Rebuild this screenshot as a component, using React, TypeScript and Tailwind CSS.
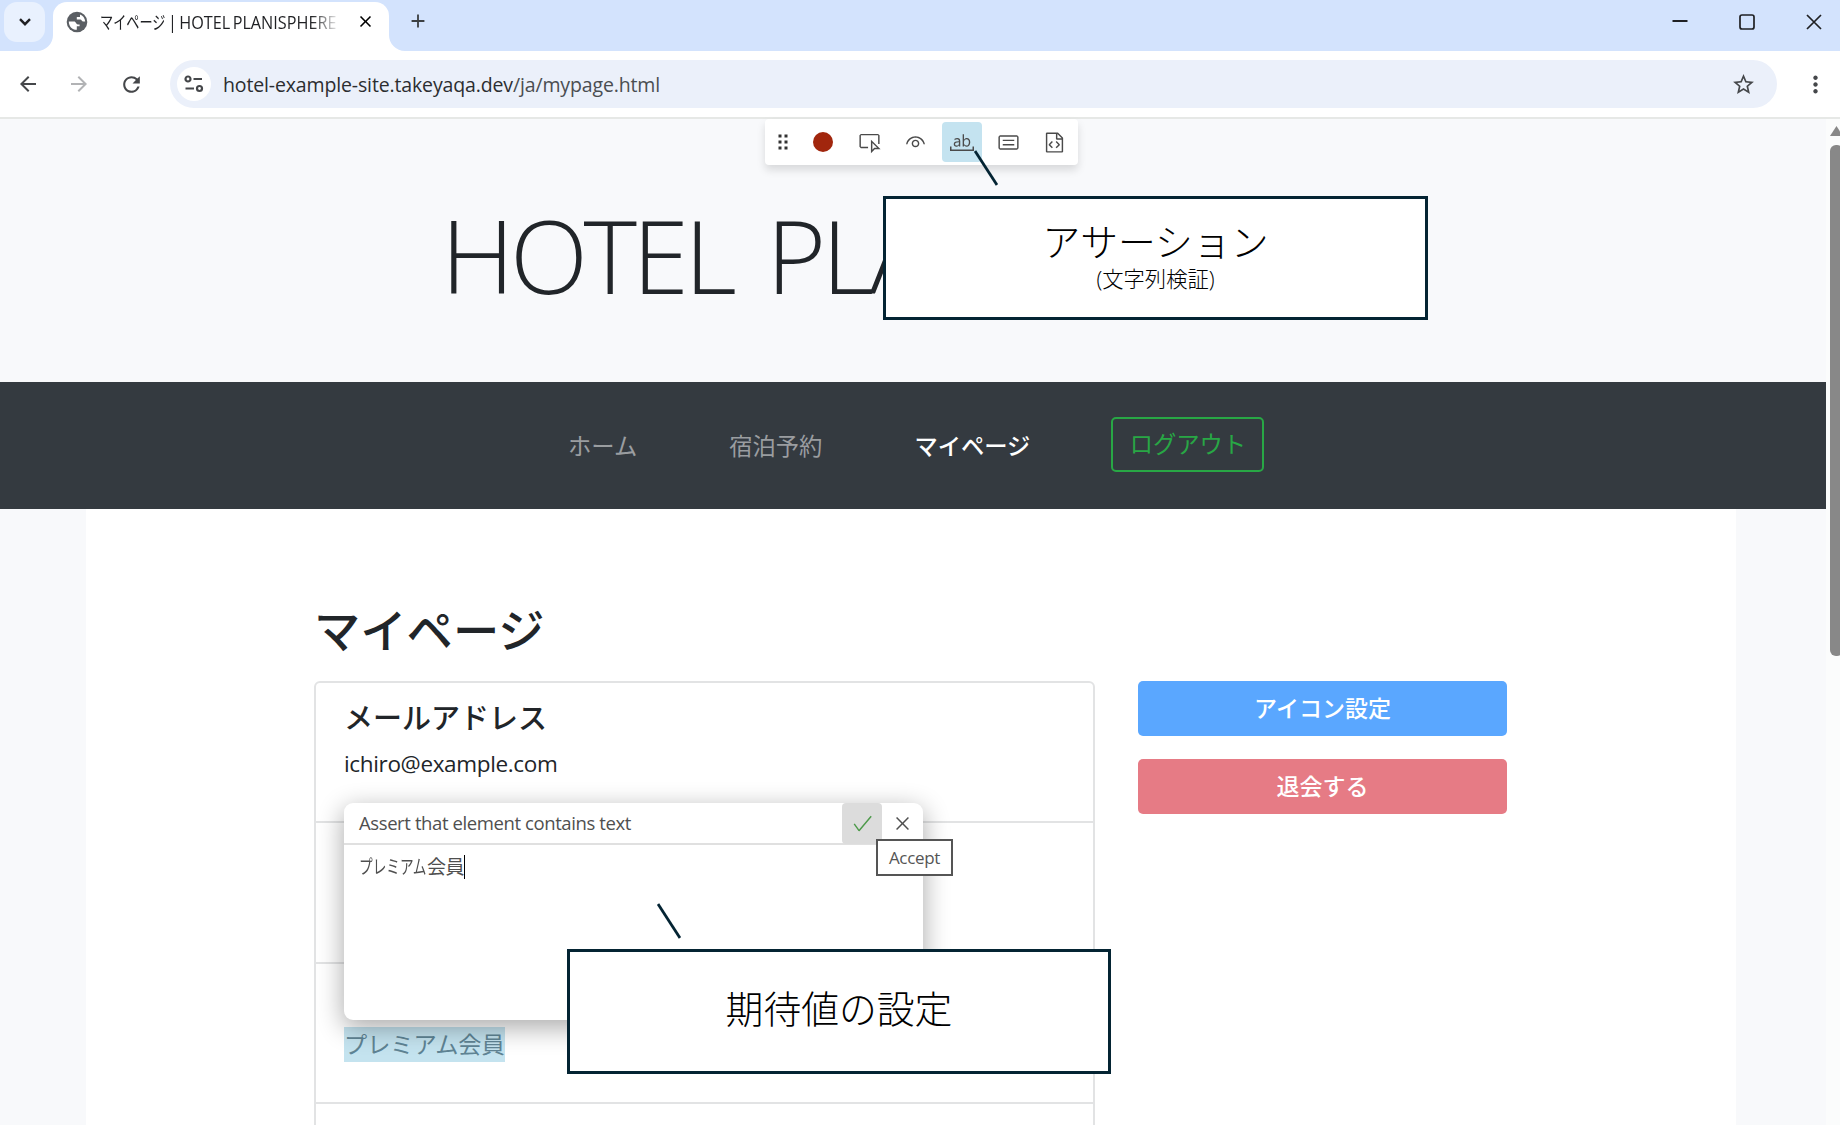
import React from 'react';
import {
  VscCheck, VscChromeClose, VscEye, VscGist, VscGripper, VscInspect,
  VscSymbolConstant, VscWholeWord
} from 'react-icons/vsc';
import {
  MdArrowBack, MdArrowForward, MdClose, MdAdd, MdRefresh, MdStarOutline, MdMoreVert
} from 'react-icons/md';

interface CalloutProps {
  title: string;
  note?: string;
  className: string;
}

const navItems = [
  { label: 'ホーム', active: false },
  { label: '宿泊予約', active: false },
  { label: 'マイページ', active: true },
];

const Callout: React.FC<CalloutProps> = ({ title, note, className }) => (
  <div className={`absolute z-30 flex flex-col items-center justify-center border-[3px] border-[#042433] bg-white pb-[5px] font-light text-black ${className}`}>
    <p className="text-[37.8px] leading-[46px]">{title}</p>
    {note && <p className="text-[21.3px] leading-[27px]">{note}</p>}
  </div>
);

const TabStrip = () => (
  <div className="flex h-[51px] shrink-0 bg-[#d3e3fd] text-[#1f2023]">
    <button className="ml-1 mt-0.5 flex h-10 w-[41px] items-center justify-center rounded-[13px] bg-[#e9f1fe]">
      <svg width="12" height="8" viewBox="0 0 12 8" fill="none" stroke="currentColor" strokeWidth="2.4"><path d="M1 1.2l5 5 5-5" /></svg>
    </button>
    <div className="relative ml-2 mt-0.5 flex h-[49px] w-[336px] rounded-t-[14px] bg-white">
      <svg className="absolute -left-4 bottom-0 text-white" width="16" height="16" viewBox="0 0 16 16" fill="currentColor"><path d="M16 0v16H0A16 16 0 0 0 16 0z" /></svg>
      <svg className="absolute -right-4 bottom-0 text-white" width="16" height="16" viewBox="0 0 16 16" fill="currentColor"><path d="M0 0v16h16A16 16 0 0 1 0 0z" /></svg>
      <svg className="ml-[13px] mt-[9px]" width="22" height="22" viewBox="0 0 22 22">
        <circle cx="11" cy="11" r="10.3" fill="#5a5e63" />
        <path d="M2.800 10.500h5.200c2 0 2.200 2.900 3.800 2.900h1.800v1.800h-2.800v3.600C6 18.800 2.800 15.400 2.800 10.500zM14 3.400c2.800 1 5 3.600 5.200 7.100h-2c-1.600 0-1.400-2.100-3-2.100h-3.400V6h3.200z" fill="#fff" />
      </svg>
      <div className="ml-3 mt-1.5 flex w-[240px] overflow-hidden whitespace-nowrap text-[18px] leading-[28px] mask-r-from-88%">
        <span className="w-[68px] shrink-0"><span className="inline-block origin-left scale-x-[.73]">マイページ</span></span>
        <span className="inline-block shrink-0 origin-left scale-x-[.9] [word-spacing:-2px]">| HOTEL PLANISPHERE</span>
      </div>
      <MdClose className="ml-4 mt-[10px] text-black" size={19} />
    </div>
    <MdAdd className="ml-[18px] mt-[10px] text-[#3c4043]" size={22} />
    <div className="ml-auto mr-[18px] mt-[14px] flex gap-[51px]">
      <svg width="16" height="16" viewBox="0 0 16 16" stroke="currentColor" strokeWidth="2"><path d="M0.500 7h15" /></svg>
      <svg width="16" height="16" viewBox="0 0 16 16" fill="none" stroke="currentColor" strokeWidth="1.7"><rect x="1" y="1" width="14" height="14" rx="2" /></svg>
      <svg width="16" height="16" viewBox="0 0 16 16" stroke="currentColor" strokeWidth="1.7"><path d="M1 1l14 14M15 1L1 15" /></svg>
    </div>
  </div>
);

const AddressBar = () => (
  <div className="flex h-[68px] shrink-0 items-center border-b-2 border-[#e6e8e6] bg-white text-[#45474a]">
    <MdArrowBack className="ml-4" size={24} />
    <MdArrowForward className="ml-[27px] text-[#b2b3b5]" size={24} />
    <MdRefresh className="ml-[28px]" size={25} />
    <div className="ml-[26px] flex h-12 w-[1607px] items-center rounded-full bg-[#ebf0fa]">
      <div className="ml-[7px] flex size-[34px] items-center justify-center rounded-full bg-white">
        <svg width="20" height="18" viewBox="0 0 20 18" fill="none" stroke="currentColor" strokeWidth="2.200">
          <circle cx="4" cy="4" r="2.500" />
          <path d="M9.500 4H18M1.500 13.500H10" />
          <circle cx="15.500" cy="13.500" r="2.500" />
        </svg>
      </div>
      <span className="ml-3 mt-px text-[19.5px] -tracking-[.14px] text-[#2b2d30]">
        hotel-example-site.takeyaqa.dev<span className="text-[#4a4d51]">/ja/mypage.html</span>
      </span>
      <MdStarOutline className="ml-auto mr-[21px]" size={25} />
    </div>
    <MdMoreVert className="ml-[25px]" size={27} />
  </div>
);

const RecorderToolbar = () => (
  <div className="absolute left-[765px] top-0 z-20 flex h-[46px] w-[313px] items-center rounded-[4px] bg-white text-[#4a4a4a] shadow-[0_5px_9px_rgba(0,0,0,.13)]">
    <VscGripper className="ml-[6px] text-[#333]" size={24} />
    <span className="ml-[18px] size-5 rounded-full bg-[#a1260d]" />
    <VscInspect className="ml-[25px]" size={23} />
    <VscEye className="ml-[23px]" size={23} />
    <span className="ml-[15px] flex size-10 items-center justify-center rounded-[4px] bg-[#c4e3f0]">
      <VscWholeWord size={24} />
    </span>
    <VscSymbolConstant className="ml-[15px]" size={23} />
    <VscGist className="ml-[23px]" size={23} />
  </div>
);

const AssertDialog = () => (
  <div className="absolute left-[28px] top-[120px] z-10 flex h-[217px] w-[579px] flex-col rounded-[9px] bg-white text-[#4f4f4f] shadow-[0_7px_26px_1px_rgba(0,0,0,.33)]">
    <div className="flex h-[42px] shrink-0 border-b-2 border-[#e0e0e0]">
      <span className="ml-[15px] text-[18.5px] leading-[39px] -tracking-[.4px]">Assert that element contains text</span>
      <button className="ml-auto flex h-[41px] w-10 items-center justify-center rounded-[4px] bg-[#dcdcdc] text-[#4d9a4a]">
        <VscCheck size={23} />
      </button>
      <button className="flex h-10 w-[41px] items-center justify-center">
        <VscChromeClose size={19} />
      </button>
    </div>
    <div className="flex items-center pl-[15px] pt-[9px] text-[19px] leading-[26px]">
      <span className="w-[68px]"><span className="inline-block origin-left scale-x-[.72] whitespace-nowrap">プレミアム</span></span>
      <span className="-tracking-[.5px]">会員</span>
      <span className="h-6 w-px bg-black" />
    </div>
    <div className="absolute -right-[30px] top-9 flex h-[37px] w-[77px] items-center justify-center border-2 border-[#555] bg-white text-[17px] -tracking-[.3px] text-[#555]">
      Accept
    </div>
  </div>
);

const MyPage = () => (
  <main className="ml-[86px] h-[617px] w-[1650px] bg-white pl-[228px] pt-[88px]">
    <h2 className="text-[46.3px] font-medium leading-[67px]">マイページ</h2>
    <div className="mt-[17px] flex items-start">
      <div className="relative w-[781px] rounded-t-[6px] border-2 border-[#e2e3e4]">
        <div className="h-[140px] border-b-2 border-[#e2e3e4] px-[28px] pt-[14px]">
          <h5 className="text-[29px] font-medium leading-[42px]">メールアドレス</h5>
          <p className="mt-[9px] text-[22.5px] leading-[32px] -tracking-[.35px]">ichiro@example.com</p>
        </div>
        <div className="h-[141px] border-b-2 border-[#e2e3e4]" />
        <div className="h-[140px] border-b-2 border-[#e2e3e4] px-[28px] pt-[63px]">
          <span className="inline-block h-[35px] bg-[#c4e3ef] text-[23.2px] leading-[34px] text-[#5f8494]">プレミアム会員</span>
        </div>
        <div className="h-[60px]" />
        <AssertDialog />
      </div>
      <div className="ml-[43px] flex w-[369px] flex-col gap-[23px] text-[23px] font-medium text-white">
        <button className="h-[55px] rounded-[5px] bg-[#5aa7ff]">アイコン設定</button>
        <button className="h-[55px] rounded-[5px] bg-[#e67b85]">退会する</button>
      </div>
    </div>
  </main>
);

export default function App() {
  return (
    <div className="relative flex h-[1125px] w-[1840px] flex-col overflow-hidden bg-white font-['Open_Sans','Noto_Sans_CJK_JP',sans-serif] text-[#212529]">
      <TabStrip />
      <AddressBar />
      <div className="relative flex min-h-0 flex-1">
        <RecorderToolbar />
        <div className="w-[1826px] overflow-hidden bg-[#f8f9fb]">
          <header className="h-[263px] pl-[441px] pt-[75px]">
            <h1 className="whitespace-nowrap text-[102px] font-light leading-[122px] -tracking-[4.4px] [word-spacing:12px]">HOTEL PLANISPHERE</h1>
          </header>
          <nav className="flex h-[127px] items-center bg-[#343a40] pl-[568px] pt-px text-[23.3px]">
            {navItems.map((item) => (
              <a key={item.label} className={item.active ? 'mr-[81px] font-medium text-white' : 'mr-[92px] text-[#9a9da0]'}>{item.label}</a>
            ))}
            <button className="-mt-1 h-[55px] w-[153px] rounded-[5px] border-2 border-[#28a745] text-[#28a745]">ログアウト</button>
          </nav>
          <MyPage />
        </div>
        <div className="flex w-[14px] flex-col overflow-hidden bg-[#fbfcfc] pl-1">
          <svg className="mt-[7px] shrink-0 text-[#888]" width="13" height="10" viewBox="0 0 13 10" fill="currentColor"><path d="M6.500 0L13 10H0z" /></svg>
          <div className="mt-[9px] h-[511px] w-[13px] shrink-0 rounded-[6px] bg-[#888]" />
        </div>
      </div>

      <Callout title="アサーション" note="(文字列検証)" className="left-[883px] top-[196px] h-[124px] w-[545px]" />
      <Callout title="期待値の設定" className="left-[567px] top-[949px] h-[125px] w-[544px]" />
      <svg className="absolute left-[974px] top-[150px] z-30 text-[#042433]" width="24" height="36" viewBox="0 0 24 36" stroke="currentColor" strokeWidth="2.800"><path d="M1 1l22 34" /></svg>
      <svg className="absolute left-[657px] top-[903px] z-30 text-[#042433]" width="24" height="36" viewBox="0 0 24 36" stroke="currentColor" strokeWidth="2.800"><path d="M1 1l22 34" /></svg>
    </div>
  );
}
